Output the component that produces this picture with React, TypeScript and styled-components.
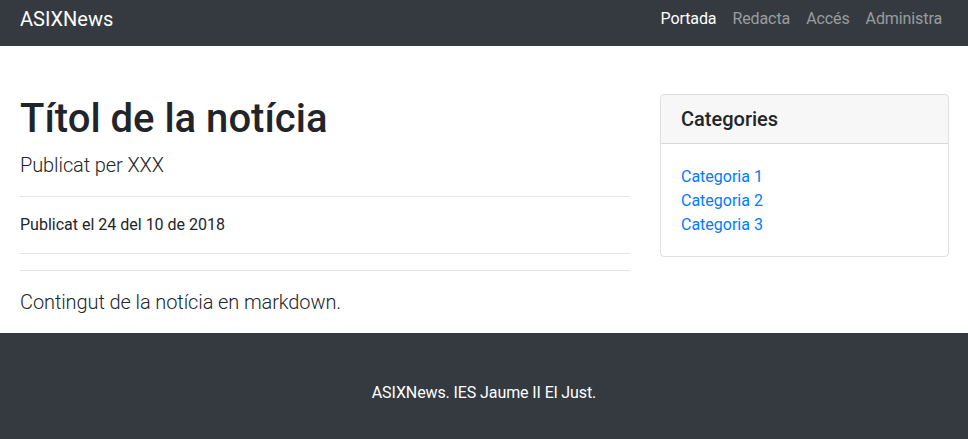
import React from 'react';
import styled, { createGlobalStyle, css } from 'styled-components';

const GlobalStyle = createGlobalStyle`
  * {
    box-sizing: border-box;
  }
  body {
    margin: 0;
    font-family: Roboto, "Liberation Sans", Arial, sans-serif;
    font-size: 16px;
    line-height: 1.5;
    color: #212529;
    background: #fff;
  }
  a {
    text-decoration: none;
  }
`;

const navLinks = [
  { title: 'Portada', active: true },
  { title: 'Redacta', active: false },
  { title: 'Accés', active: false },
  { title: 'Administra', active: false },
];

const categories = ['Categoria 1', 'Categoria 2', 'Categoria 3'];

function App() {
  return (
    <>
      <GlobalStyle />
      <Navbar>
        <Brand href="#">ASIXNews</Brand>
        <NavList>
          {navLinks.map((link) => (
            <li key={link.title}>
              <NavLink href="#" isActive={link.active}>
                {link.title}
              </NavLink>
            </li>
          ))}
        </NavList>
      </Navbar>

      <Main>
        <Article>
          <Title>Títol de la notícia</Title>
          <Lead>Publicat per XXX</Lead>
          <Divider />
          <Meta>Publicat el 24 del 10 de 2018</Meta>
          <Divider />
          <Divider />
          <Lead>Contingut de la notícia en markdown.</Lead>
        </Article>

        <aside>
          <Card>
            <CardHeader>
              <h5>Categories</h5>
            </CardHeader>
            <CardBody>
              <CategoryList>
                {categories.map((cat) => (
                  <li key={cat}>
                    <CategoryLink href="#">{cat}</CategoryLink>
                  </li>
                ))}
              </CategoryList>
            </CardBody>
          </Card>
        </aside>
      </Main>

      <Footer>
        <p>ASIXNews. IES Jaume II El Just.</p>
      </Footer>
    </>
  );
}

const Navbar = styled.nav`
  display: flex;
  align-items: center;
  justify-content: space-between;
  height: 46px;
  padding: 0 18px 8px 20px;
  background-color: #343a40;
`;

const Brand = styled.a`
  font-size: 20px;
  line-height: 30px;
  color: #fff;
`;

const NavList = styled.ul`
  display: flex;
  margin: 0;
  padding: 0;
  list-style: none;
`;

const NavLink = styled.a<{ isActive: boolean }>`
  display: block;
  padding: 0 8px;
  line-height: 24px;
  letter-spacing: -0.1px;
  color: rgba(255, 255, 255, 0.5);
  ${({ isActive }) =>
    isActive &&
    css`
      color: #fff;
    `}
`;

const Main = styled.main`
  display: grid;
  grid-template-columns: 610px 1fr;
  column-gap: 30px;
  padding: 48px 19px 0 20px;
`;

const Article = styled.article`
  display: flow-root;
`;

const Title = styled.h1`
  margin: 1px 0 7px;
  font-size: 40px;
  font-weight: 500;
  line-height: 1.2;
`;

const Lead = styled.p`
  margin: 0 0 16px;
  font-size: 20px;
  font-weight: 300;
  line-height: 30px;
  letter-spacing: -0.1px;
`;

const Meta = styled.p`
  margin: 0 0 16px;
  font-size: 16px;
  line-height: 24px;
`;

const Divider = styled.hr`
  margin: 16px 0;
  border: 0;
  border-top: 1px solid rgba(0, 0, 0, 0.1);
`;

const Card = styled.div`
  border: 1px solid rgba(0, 0, 0, 0.125);
  border-radius: 4px;
  overflow: hidden;
`;

const CardHeader = styled.div`
  padding: 12px 20px;
  background-color: rgba(0, 0, 0, 0.03);
  border-bottom: 1px solid rgba(0, 0, 0, 0.125);
  h5 {
    margin: 0;
    font-size: 20px;
    font-weight: 500;
    line-height: 1.2;
  }
`;

const CardBody = styled.div`
  padding: 21px 20px 19px;
`;

const CategoryList = styled.ul`
  margin: 0;
  padding: 0;
  list-style: none;
`;

const CategoryLink = styled.a`
  color: #007bff;
`;

const Footer = styled.footer`
  padding: 48px 0;
  background-color: #343a40;
  color: #fff;
  text-align: center;
  p {
    margin: 0;
    letter-spacing: -0.1px;
  }
`;

export default App;
